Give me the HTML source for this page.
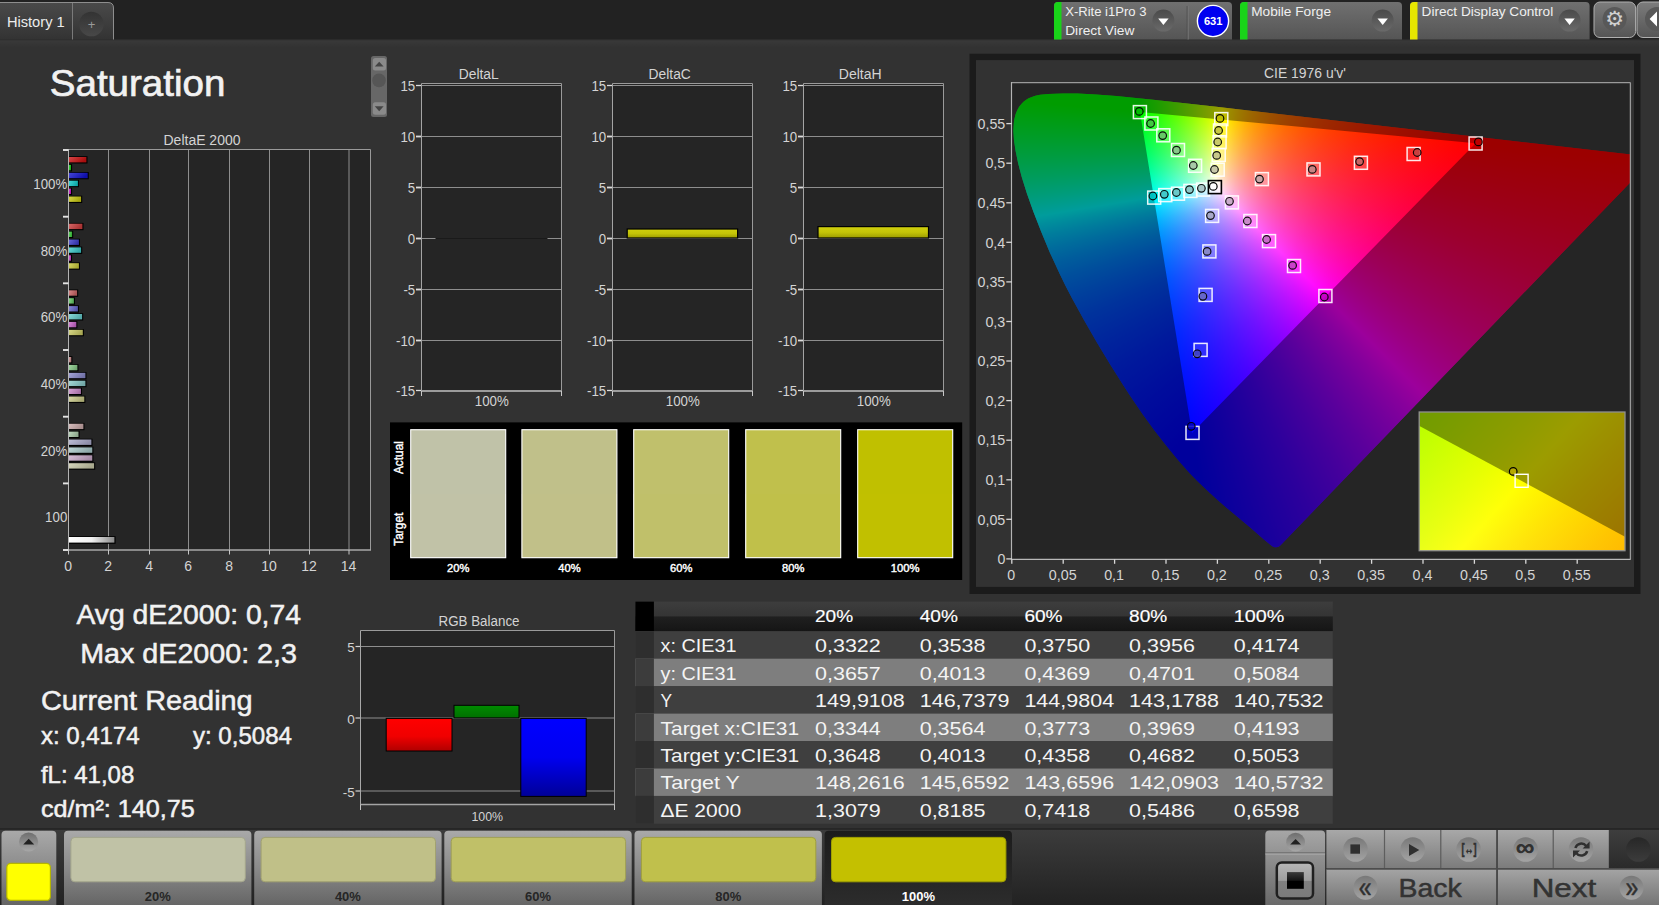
<!DOCTYPE html>
<html><head><meta charset="utf-8"><title>Saturation</title>
<style>
html,body{margin:0;padding:0;background:#323232;overflow:hidden}
body{width:1659px;height:905px;position:relative;font-family:"Liberation Sans",sans-serif}
#cie,#inset{position:absolute;overflow:hidden;background:#252525}
#cie div,#inset div{position:absolute;left:0;top:0;width:100%;height:100%}
svg{position:absolute;left:0;top:0}
svg text{font-family:"Liberation Sans",sans-serif}
</style></head><body>
<div id="cie" style="left:1012px;top:83px;width:618.5px;height:476.4px">
<div style="clip-path:polygon(259.9px 463.0px,261.7px 463.9px,263.0px 464.2px,264.4px 464.2px,265.7px 463.9px,267.0px 463.4px,268.6px 462.2px,633.1px 84.0px,633.9px 83.0px,634.5px 81.9px,634.9px 80.6px,635.0px 79.3px,634.9px 78.0px,634.5px 76.8px,633.9px 75.7px,633.1px 74.7px,632.1px 73.8px,630.9px 73.2px,629.0px 72.7px,202.3px 23.6px,143.5px 17.1px,104.3px 13.1px,84.0px 11.6px,65.5px 10.6px,50.8px 10.5px,36.3px 10.9px,28.1px 11.8px,23.4px 12.8px,20.6px 13.7px,16.6px 15.3px,14.6px 16.5px,12.1px 18.3px,10.3px 19.9px,7.5px 23.2px,6.1px 25.4px,4.9px 27.9px,3.6px 31.2px,2.2px 36.8px,1.8px 40.3px,1.4px 48.1px,2.0px 57.6px,3.6px 68.1px,6.2px 80.4px,9.8px 94.3px,14.9px 110.6px,21.3px 128.6px,29.0px 148.3px,37.8px 169.4px,48.0px 191.6px,53.6px 202.9px,59.6px 214.5px,72.1px 237.3px,85.2px 259.9px,98.5px 281.9px,111.6px 302.8px,118.1px 312.7px,130.5px 330.9px,142.5px 347.4px,153.8px 362.1px,164.4px 375.0px,169.3px 380.8px,178.2px 390.7px,186.1px 398.7px,196.6px 408.8px,206.2px 417.5px,214.8px 424.9px,238.8px 445.1px,251.9px 456.6px);background:conic-gradient(from 0deg at 179.97px 349.99px,#92ffff 0deg,#c3ffff 2.55deg,#f5ffff 4.9deg,#ffffff 5.35deg,#ffe3ff 6.7deg,#ffc9ff 8.2deg,#ffafff 9.95deg,#ff97ff 11.95deg,#ff80ff 14.3deg,#ff69ff 17.1deg,#ff54ff 20.4deg,#ff3fff 24.4deg,#ff2bff 29.3deg,#ff17ff 35.4deg,#ff03ff 43.15deg,#ff00ff 44.7deg,#ff00ff 170.8deg,#0000ff 170.85deg,#0000ff 224.35deg,#00ffff 224.4deg,#00ffff 350.8deg,#31ffff 354.15deg,#62ffff 357.25deg,#92ffff 360deg),conic-gradient(from 0deg at 128.00px 28.90px,#ffff00 0deg,#ffff00 95.45deg,#ffff2a 104.75deg,#ffff4e 111.95deg,#ffff71 117.85deg,#ffff92 122.8deg,#ffffb3 127.05deg,#ffffd4 130.75deg,#fffff5 134deg,#ffffff 134.9deg,#dbffff 138.2deg,#b8ffff 141.95deg,#94ffff 146.3deg,#6fffff 151.35deg,#49ffff 157.3deg,#20ffff 164.6deg,#00ffff 170.9deg,#00ffff 275.35deg,#00ff00 275.4deg,#00ff00 350.8deg,#ffff00 350.85deg,#ffff00 360deg),conic-gradient(from 0deg at 463.61px 60.34px,#ffff00 0deg,#ffff00 44.35deg,#ff0000 44.4deg,#ff0000 95.35deg,#ff00ff 95.4deg,#ff01ff 224.6deg,#ff15ff 231.85deg,#ff29ff 237.6deg,#ff3eff 242.25deg,#ff53ff 246.1deg,#ff6aff 249.3deg,#ff81ff 252deg,#ff99ff 254.3deg,#ffb2ff 256.25deg,#ffccff 257.95deg,#ffe7ff 259.45deg,#ffffff 260.55deg,#ffffc9 263.05deg,#ffff9a 265.45deg,#ffff6c 268.1deg,#ffff3e 271deg,#ffff0f 274.25deg,#ffff00 275.35deg,#ffff00 360deg);background-blend-mode:darken,darken,normal">
<div style="background:rgba(0,0,0,0.39);clip-path:polygon(evenodd,-5px -5px,700px -5px,700px 500px,-5px 500px,-5px -5px,463.6px 60.3px,128.0px 28.9px,180.0px 350.0px,463.6px 60.3px,-5px -5px)"></div>
</div></div>
<div id="inset" style="left:1419.2px;top:412.0px;width:205.8px;height:138.7px">
<div style="background:conic-gradient(from 36.6052deg at -1095.99px 1413.61px,#a3ffff 0deg,#c5ffff 2.06987deg,#e7ffff 3.94447deg,#ffffff 5.11609deg,#ffe2ff 6.58063deg,#ffc6ff 8.20137deg,#ffabff 10.0369deg,#ffaaff 10.1736deg),conic-gradient(from 105.771deg at -428.49px -217.19px,#ffff00 0deg,#ffff00 12.7462deg,#ffff23 26.689deg,#ffff24 27.0532deg),conic-gradient(from 291.26deg at 1084.51px 598.21px,#ffff22 0deg,#ffff0b 4.65455deg,#ffff00 7.16519deg,#ffff00 14.6689deg);background-blend-mode:darken,darken,normal">
<div style="background:rgba(0,0,0,0.39);clip-path:polygon(-2px 12.7px,207.8px 125.7px,207.8px -2px,-2px -2px)"></div>
</div></div>

<svg width="1659" height="905" viewBox="0 0 1659 905">
<defs><linearGradient id="gBand" x1="0" y1="0" x2="0" y2="1"><stop offset="0" stop-color="#393939"/><stop offset="1" stop-color="#323232"/></linearGradient>
<linearGradient id="gTab" x1="0" y1="0" x2="0" y2="1"><stop offset="0" stop-color="#4a4a4a"/><stop offset="1" stop-color="#333333"/></linearGradient>
<linearGradient id="gPlus" x1="0" y1="0" x2="0" y2="1"><stop offset="0" stop-color="#333333"/><stop offset="1" stop-color="#484848"/></linearGradient>
<linearGradient id="gDev" x1="0" y1="0" x2="0" y2="1"><stop offset="0" stop-color="#707070"/><stop offset="1" stop-color="#555555"/></linearGradient>
<linearGradient id="gDrop" x1="0" y1="0" x2="0" y2="1"><stop offset="0" stop-color="#4a4a4a"/><stop offset="1" stop-color="#6a6a6a"/></linearGradient>
<linearGradient id="gBtn" x1="0" y1="0" x2="0" y2="1"><stop offset="0" stop-color="#7c7c7c"/><stop offset="1" stop-color="#555555"/></linearGradient>
<linearGradient id="b00" x1="0" y1="0" x2="1" y2="0.35"><stop offset="0" stop-color="#d84646"/><stop offset="1" stop-color="#a80e0e"/></linearGradient>
<linearGradient id="b01" x1="0" y1="0" x2="1" y2="0.35"><stop offset="0" stop-color="#46d846"/><stop offset="1" stop-color="#0ea80e"/></linearGradient>
<linearGradient id="b02" x1="0" y1="0" x2="1" y2="0.35"><stop offset="0" stop-color="#4646d8"/><stop offset="1" stop-color="#0e0ea8"/></linearGradient>
<linearGradient id="b03" x1="0" y1="0" x2="1" y2="0.35"><stop offset="0" stop-color="#46d8d8"/><stop offset="1" stop-color="#0ea8a8"/></linearGradient>
<linearGradient id="b04" x1="0" y1="0" x2="1" y2="0.35"><stop offset="0" stop-color="#d846d8"/><stop offset="1" stop-color="#a80ea8"/></linearGradient>
<linearGradient id="b05" x1="0" y1="0" x2="1" y2="0.35"><stop offset="0" stop-color="#d8d846"/><stop offset="1" stop-color="#a8a80e"/></linearGradient>
<linearGradient id="b10" x1="0" y1="0" x2="1" y2="0.35"><stop offset="0" stop-color="#d86767"/><stop offset="1" stop-color="#a83232"/></linearGradient>
<linearGradient id="b11" x1="0" y1="0" x2="1" y2="0.35"><stop offset="0" stop-color="#67d867"/><stop offset="1" stop-color="#32a832"/></linearGradient>
<linearGradient id="b12" x1="0" y1="0" x2="1" y2="0.35"><stop offset="0" stop-color="#6767d8"/><stop offset="1" stop-color="#3232a8"/></linearGradient>
<linearGradient id="b13" x1="0" y1="0" x2="1" y2="0.35"><stop offset="0" stop-color="#67d8d8"/><stop offset="1" stop-color="#32a8a8"/></linearGradient>
<linearGradient id="b14" x1="0" y1="0" x2="1" y2="0.35"><stop offset="0" stop-color="#d867d8"/><stop offset="1" stop-color="#a832a8"/></linearGradient>
<linearGradient id="b15" x1="0" y1="0" x2="1" y2="0.35"><stop offset="0" stop-color="#d8d867"/><stop offset="1" stop-color="#a8a832"/></linearGradient>
<linearGradient id="b20" x1="0" y1="0" x2="1" y2="0.35"><stop offset="0" stop-color="#d88888"/><stop offset="1" stop-color="#a85454"/></linearGradient>
<linearGradient id="b21" x1="0" y1="0" x2="1" y2="0.35"><stop offset="0" stop-color="#88d888"/><stop offset="1" stop-color="#54a854"/></linearGradient>
<linearGradient id="b22" x1="0" y1="0" x2="1" y2="0.35"><stop offset="0" stop-color="#8888d8"/><stop offset="1" stop-color="#5454a8"/></linearGradient>
<linearGradient id="b23" x1="0" y1="0" x2="1" y2="0.35"><stop offset="0" stop-color="#88d8d8"/><stop offset="1" stop-color="#54a8a8"/></linearGradient>
<linearGradient id="b24" x1="0" y1="0" x2="1" y2="0.35"><stop offset="0" stop-color="#d888d8"/><stop offset="1" stop-color="#a854a8"/></linearGradient>
<linearGradient id="b25" x1="0" y1="0" x2="1" y2="0.35"><stop offset="0" stop-color="#d8d888"/><stop offset="1" stop-color="#a8a854"/></linearGradient>
<linearGradient id="b30" x1="0" y1="0" x2="1" y2="0.35"><stop offset="0" stop-color="#d8a5a5"/><stop offset="1" stop-color="#a87272"/></linearGradient>
<linearGradient id="b31" x1="0" y1="0" x2="1" y2="0.35"><stop offset="0" stop-color="#a5d8a5"/><stop offset="1" stop-color="#72a872"/></linearGradient>
<linearGradient id="b32" x1="0" y1="0" x2="1" y2="0.35"><stop offset="0" stop-color="#a5a5d8"/><stop offset="1" stop-color="#7272a8"/></linearGradient>
<linearGradient id="b33" x1="0" y1="0" x2="1" y2="0.35"><stop offset="0" stop-color="#a5d8d8"/><stop offset="1" stop-color="#72a8a8"/></linearGradient>
<linearGradient id="b34" x1="0" y1="0" x2="1" y2="0.35"><stop offset="0" stop-color="#d8a5d8"/><stop offset="1" stop-color="#a872a8"/></linearGradient>
<linearGradient id="b35" x1="0" y1="0" x2="1" y2="0.35"><stop offset="0" stop-color="#d8d8a5"/><stop offset="1" stop-color="#a8a872"/></linearGradient>
<linearGradient id="b40" x1="0" y1="0" x2="1" y2="0.35"><stop offset="0" stop-color="#d8bfbf"/><stop offset="1" stop-color="#a88d8d"/></linearGradient>
<linearGradient id="b41" x1="0" y1="0" x2="1" y2="0.35"><stop offset="0" stop-color="#bfd8bf"/><stop offset="1" stop-color="#8da88d"/></linearGradient>
<linearGradient id="b42" x1="0" y1="0" x2="1" y2="0.35"><stop offset="0" stop-color="#bfbfd8"/><stop offset="1" stop-color="#8d8da8"/></linearGradient>
<linearGradient id="b43" x1="0" y1="0" x2="1" y2="0.35"><stop offset="0" stop-color="#bfd8d8"/><stop offset="1" stop-color="#8da8a8"/></linearGradient>
<linearGradient id="b44" x1="0" y1="0" x2="1" y2="0.35"><stop offset="0" stop-color="#d8bfd8"/><stop offset="1" stop-color="#a88da8"/></linearGradient>
<linearGradient id="b45" x1="0" y1="0" x2="1" y2="0.35"><stop offset="0" stop-color="#d8d8bf"/><stop offset="1" stop-color="#a8a88d"/></linearGradient>
<linearGradient id="bw" x1="0" y1="0" x2="1" y2="0"><stop offset="0" stop-color="#ffffff"/><stop offset="0.5" stop-color="#f0f0f0"/><stop offset="1" stop-color="#8a8a8a"/></linearGradient>
<linearGradient id="rbR" x1="0" y1="0" x2="0" y2="1"><stop offset="0" stop-color="#ff0000"/><stop offset="0.55" stop-color="#f00000"/><stop offset="1" stop-color="#b00000"/></linearGradient>
<linearGradient id="rbG" x1="0" y1="0" x2="0" y2="1"><stop offset="0" stop-color="#008c00"/><stop offset="1" stop-color="#007000"/></linearGradient>
<linearGradient id="rbB" x1="0" y1="0" x2="0" y2="1"><stop offset="0" stop-color="#0000ff"/><stop offset="0.5" stop-color="#0000f0"/><stop offset="1" stop-color="#000098"/></linearGradient>
<linearGradient id="gY" x1="0" y1="0" x2="0" y2="1"><stop offset="0" stop-color="#d0d00c"/><stop offset="0.5" stop-color="#c4c408"/><stop offset="1" stop-color="#9c9c00"/></linearGradient>
<linearGradient id="gHdr" x1="0" y1="0" x2="0" y2="1"><stop offset="0" stop-color="#3d3d3d"/><stop offset="0.47" stop-color="#353535"/><stop offset="0.53" stop-color="#1f1f1f"/><stop offset="1" stop-color="#151515"/></linearGradient>
<linearGradient id="gBar" x1="0" y1="0" x2="0" y2="1"><stop offset="0" stop-color="#3c3c3c"/><stop offset="1" stop-color="#222222"/></linearGradient>
<linearGradient id="gTile" x1="0" y1="0" x2="0" y2="1"><stop offset="0" stop-color="#a9a9a9"/><stop offset="0.5" stop-color="#8a8a8a"/><stop offset="1" stop-color="#646464"/></linearGradient>
<linearGradient id="gTileSel" x1="0" y1="0" x2="0" y2="1"><stop offset="0" stop-color="#1c1c1c"/><stop offset="1" stop-color="#2c2c2c"/></linearGradient>
<linearGradient id="gCirc" x1="0" y1="0" x2="0" y2="1"><stop offset="0" stop-color="#6e6e6e"/><stop offset="1" stop-color="#a8a8a8"/></linearGradient>
<linearGradient id="gCtl" x1="0" y1="0" x2="0" y2="1"><stop offset="0" stop-color="#a6a6a6"/><stop offset="1" stop-color="#686868"/></linearGradient>
<linearGradient id="gIco" x1="0" y1="0" x2="0" y2="1"><stop offset="0" stop-color="#b8b8b8"/><stop offset="0.5" stop-color="#9e9e9e"/><stop offset="0.51" stop-color="#808080"/><stop offset="1" stop-color="#7a7a7a"/></linearGradient>
<linearGradient id="gIcoB" x1="0" y1="0" x2="0" y2="1"><stop offset="0" stop-color="#3a3a3a"/><stop offset="0.5" stop-color="#141414"/><stop offset="0.52" stop-color="#000000"/><stop offset="1" stop-color="#000000"/></linearGradient>
<linearGradient id="gSm" x1="0" y1="0" x2="0" y2="1"><stop offset="0" stop-color="#a8a8a8"/><stop offset="1" stop-color="#7c7c7c"/></linearGradient>
<linearGradient id="gSmC" x1="0" y1="0" x2="0" y2="1"><stop offset="0" stop-color="#787878"/><stop offset="1" stop-color="#a4a4a4"/></linearGradient>
<linearGradient id="gDk" x1="0" y1="0" x2="0" y2="1"><stop offset="0" stop-color="#3e3e3e"/><stop offset="1" stop-color="#2a2a2a"/></linearGradient>
<linearGradient id="gDkC" x1="0" y1="0" x2="0" y2="1"><stop offset="0" stop-color="#272727"/><stop offset="1" stop-color="#3c3c3c"/></linearGradient>
<linearGradient id="gBig" x1="0" y1="0" x2="0" y2="1"><stop offset="0" stop-color="#a4a4a4"/><stop offset="1" stop-color="#747474"/></linearGradient></defs>
<rect x="0.0" y="0.0" width="1659.0" height="39.2" fill="#222222"/>
<rect x="0.0" y="39.2" width="1659.0" height="1.2" fill="#2b2b2b"/>
<rect x="0.0" y="40.4" width="1659.0" height="7.0" fill="url(#gBand)"/>
<path d="M0,39.5 L0,2.5 L108,2.5 Q113.5,2.5 113.5,8 L113.5,39.5 Z" fill="url(#gTab)"/>
<path d="M0,2.5 L108,2.5 Q113.5,2.5 113.5,8 L113.5,39.5" fill="none" stroke="#8e8e8e" stroke-width="1"/>
<line x1="72.5" y1="3.0" x2="72.5" y2="39.5" stroke="#7a7a7a" stroke-width="1"/>
<text x="6.9" y="27.0" font-size="14.0" fill="#ececec" textLength="57.8" lengthAdjust="spacingAndGlyphs">History 1</text>
<circle cx="91.4" cy="24" r="12.3" fill="url(#gPlus)"/>
<text x="91.6" y="28.6" font-size="13.0" fill="#9a9a9a" text-anchor="middle">+</text>
<path d="M1054.0,39.5 L1054.0,6 Q1054.0,2 1058.0,2 L1228.0,2 Q1232.0,2 1232.0,6 L1232.0,39.5 Z" fill="url(#gDev)"/>
<path d="M1054.0,39.5 L1054.0,6 Q1054.0,2 1058.0,2 L1061.5,2 L1061.5,39.5 Z" fill="#19d419"/>
<circle cx="1163.4" cy="20.6" r="11" fill="url(#gDrop)"/>
<path d="M1158.2,18.6 L1168.6,18.6 L1163.4,25 Z" fill="#ffffff"/>
<line x1="1187.2" y1="6.0" x2="1187.2" y2="39.5" stroke="#4c4c4c" stroke-width="1"/>
<line x1="1188.2" y1="6.0" x2="1188.2" y2="39.5" stroke="#777777" stroke-width="1"/>
<text x="1065.2" y="15.9" font-size="12.4" fill="#f0f0f0" textLength="81.3" lengthAdjust="spacingAndGlyphs">X-Rite i1Pro 3</text>
<text x="1065.2" y="34.6" font-size="12.4" fill="#f0f0f0" textLength="69.2" lengthAdjust="spacingAndGlyphs">Direct View</text>
<circle cx="1213" cy="21" r="15.6" fill="#0000f0" stroke="#ffffff" stroke-width="1.4"/>
<text x="1213.2" y="25.1" font-size="11.5" fill="#ffffff" text-anchor="middle" textLength="18.6" lengthAdjust="spacingAndGlyphs" font-weight="bold">631</text>
<path d="M1240.0,39.5 L1240.0,6 Q1240.0,2 1244.0,2 L1398.0,2 Q1402.0,2 1402.0,6 L1402.0,39.5 Z" fill="url(#gDev)"/>
<path d="M1240.0,39.5 L1240.0,6 Q1240.0,2 1244.0,2 L1247.5,2 L1247.5,39.5 Z" fill="#19d419"/>
<circle cx="1382.7" cy="20.6" r="11" fill="url(#gDrop)"/>
<path d="M1377.5,18.6 L1387.9,18.6 L1382.7,25 Z" fill="#ffffff"/>
<text x="1251.2" y="15.9" font-size="12.4" fill="#f0f0f0" textLength="79.8" lengthAdjust="spacingAndGlyphs">Mobile Forge</text>
<path d="M1410.0,39.5 L1410.0,6 Q1410.0,2 1414.0,2 L1585.6,2 Q1589.6,2 1589.6,6 L1589.6,39.5 Z" fill="url(#gDev)"/>
<path d="M1410.0,39.5 L1410.0,6 Q1410.0,2 1414.0,2 L1417.5,2 L1417.5,39.5 Z" fill="#e6e600"/>
<circle cx="1569.6" cy="20.6" r="11" fill="url(#gDrop)"/>
<path d="M1564.4,18.6 L1574.8,18.6 L1569.6,25 Z" fill="#ffffff"/>
<text x="1421.6" y="15.9" font-size="12.4" fill="#f0f0f0" textLength="131.6" lengthAdjust="spacingAndGlyphs">Direct Display Control</text>
<rect x="1594" y="2" width="41.6" height="35.5" rx="6" fill="url(#gBtn)" stroke="#b0b0b0" stroke-width="1"/>
<circle cx="1614.6" cy="19" r="12" fill="#585858"/>
<text x="1614.6" y="26.3" font-size="21.0" fill="#d0d0d0" text-anchor="middle" style="font-family:'DejaVu Sans',sans-serif">⚙</text>
<rect x="1637" y="2" width="41.6" height="35.5" rx="6" fill="url(#gBtn)" stroke="#b0b0b0" stroke-width="1"/>
<circle cx="1657" cy="19" r="12" fill="#585858"/>
<path d="M1649.6,19 L1657,11.5 L1657,26.5 Z" fill="#ffffff"/>
<text x="49.8" y="95.7" font-size="37.7" fill="#f2f2f2" textLength="175.6" lengthAdjust="spacingAndGlyphs" stroke="#f2f2f2" stroke-width="0.7">Saturation</text>
<rect x="371" y="56" width="16" height="61" rx="2.5" fill="#676767"/>
<rect x="372.8" y="58" width="13.2" height="12.6" rx="2.5" fill="#8a8a8a"/>
<path d="M374.8,66.5 L383.6,66.5 L379.2,61.8 Z" fill="#444444"/>
<circle cx="379" cy="80.4" r="6.8" fill="#565656"/>
<rect x="372.8" y="102.2" width="13.2" height="12.6" rx="2.5" fill="#8a8a8a"/>
<path d="M374.8,106.2 L383.6,106.2 L379.2,111.2 Z" fill="#444444"/>
<text x="202.0" y="145.0" font-size="14.0" fill="#d4d4d4" text-anchor="middle" textLength="77.0" lengthAdjust="spacingAndGlyphs">DeltaE 2000</text>
<rect x="68.5" y="149.5" width="302.0" height="400.5" fill="#252525"/>
<line x1="108.5" y1="149.5" x2="108.5" y2="550.0" stroke="#8e8e8e" stroke-width="1"/>
<line x1="149.5" y1="149.5" x2="149.5" y2="550.0" stroke="#8e8e8e" stroke-width="1"/>
<line x1="188.5" y1="149.5" x2="188.5" y2="550.0" stroke="#8e8e8e" stroke-width="1"/>
<line x1="229.5" y1="149.5" x2="229.5" y2="550.0" stroke="#8e8e8e" stroke-width="1"/>
<line x1="269.5" y1="149.5" x2="269.5" y2="550.0" stroke="#8e8e8e" stroke-width="1"/>
<line x1="309.5" y1="149.5" x2="309.5" y2="550.0" stroke="#8e8e8e" stroke-width="1"/>
<line x1="349.0" y1="149.5" x2="349.0" y2="550.0" stroke="#8e8e8e" stroke-width="1"/>
<line x1="68.5" y1="149.5" x2="370.5" y2="149.5" stroke="#9a9a9a" stroke-width="1"/>
<line x1="370.5" y1="149.5" x2="370.5" y2="550.0" stroke="#9a9a9a" stroke-width="1"/>
<line x1="68.5" y1="149.0" x2="68.5" y2="550.5" stroke="#b4b4b4" stroke-width="1"/>
<line x1="68.0" y1="550.0" x2="371.0" y2="550.0" stroke="#a8a8a8" stroke-width="1.6"/>
<line x1="63.0" y1="150.0" x2="68.5" y2="150.0" stroke="#e4e4e4" stroke-width="1.9"/>
<line x1="63.0" y1="216.7" x2="68.5" y2="216.7" stroke="#e4e4e4" stroke-width="1.9"/>
<line x1="63.0" y1="283.3" x2="68.5" y2="283.3" stroke="#e4e4e4" stroke-width="1.9"/>
<line x1="63.0" y1="350.0" x2="68.5" y2="350.0" stroke="#e4e4e4" stroke-width="1.9"/>
<line x1="63.0" y1="416.7" x2="68.5" y2="416.7" stroke="#e4e4e4" stroke-width="1.9"/>
<line x1="63.0" y1="483.4" x2="68.5" y2="483.4" stroke="#e4e4e4" stroke-width="1.9"/>
<line x1="63.0" y1="550.0" x2="68.5" y2="550.0" stroke="#e4e4e4" stroke-width="1.9"/>
<line x1="68.5" y1="550.0" x2="68.5" y2="554.5" stroke="#c8c8c8" stroke-width="1"/>
<text x="68.1" y="571.0" font-size="14.0" fill="#d4d4d4" text-anchor="middle">0</text>
<line x1="108.5" y1="550.0" x2="108.5" y2="554.5" stroke="#c8c8c8" stroke-width="1"/>
<text x="108.1" y="571.0" font-size="14.0" fill="#d4d4d4" text-anchor="middle">2</text>
<line x1="149.5" y1="550.0" x2="149.5" y2="554.5" stroke="#c8c8c8" stroke-width="1"/>
<text x="149.1" y="571.0" font-size="14.0" fill="#d4d4d4" text-anchor="middle">4</text>
<line x1="188.5" y1="550.0" x2="188.5" y2="554.5" stroke="#c8c8c8" stroke-width="1"/>
<text x="188.1" y="571.0" font-size="14.0" fill="#d4d4d4" text-anchor="middle">6</text>
<line x1="229.5" y1="550.0" x2="229.5" y2="554.5" stroke="#c8c8c8" stroke-width="1"/>
<text x="229.1" y="571.0" font-size="14.0" fill="#d4d4d4" text-anchor="middle">8</text>
<line x1="269.5" y1="550.0" x2="269.5" y2="554.5" stroke="#c8c8c8" stroke-width="1"/>
<text x="269.1" y="571.0" font-size="14.0" fill="#d4d4d4" text-anchor="middle">10</text>
<line x1="309.5" y1="550.0" x2="309.5" y2="554.5" stroke="#c8c8c8" stroke-width="1"/>
<text x="309.1" y="571.0" font-size="14.0" fill="#d4d4d4" text-anchor="middle">12</text>
<line x1="349.0" y1="550.0" x2="349.0" y2="554.5" stroke="#c8c8c8" stroke-width="1"/>
<text x="348.6" y="571.0" font-size="14.0" fill="#d4d4d4" text-anchor="middle">14</text>
<text x="67.3" y="188.9" font-size="14.0" fill="#d4d4d4" text-anchor="end" textLength="34.0" lengthAdjust="spacingAndGlyphs">100%</text>
<text x="67.3" y="255.6" font-size="14.0" fill="#d4d4d4" text-anchor="end" textLength="26.6" lengthAdjust="spacingAndGlyphs">80%</text>
<text x="67.3" y="322.2" font-size="14.0" fill="#d4d4d4" text-anchor="end" textLength="26.6" lengthAdjust="spacingAndGlyphs">60%</text>
<text x="67.3" y="388.9" font-size="14.0" fill="#d4d4d4" text-anchor="end" textLength="26.6" lengthAdjust="spacingAndGlyphs">40%</text>
<text x="67.3" y="455.6" font-size="14.0" fill="#d4d4d4" text-anchor="end" textLength="26.6" lengthAdjust="spacingAndGlyphs">20%</text>
<text x="67.3" y="522.2" font-size="14.0" fill="#d4d4d4" text-anchor="end" textLength="22.2" lengthAdjust="spacingAndGlyphs">100</text>
<rect x="69.0" y="156.2" width="18.5" height="7.3" fill="#000000"/>
<rect x="69.0" y="157.0" width="17.4" height="5.4" fill="url(#b00)"/>
<rect x="69.0" y="164.1" width="3.1" height="7.3" fill="#000000"/>
<rect x="69.0" y="164.9" width="2.0" height="5.4" fill="url(#b01)"/>
<rect x="69.0" y="172.0" width="19.8" height="7.3" fill="#000000"/>
<rect x="69.0" y="172.8" width="18.7" height="5.4" fill="url(#b02)"/>
<rect x="69.0" y="179.9" width="10.0" height="7.3" fill="#000000"/>
<rect x="69.0" y="180.7" width="8.9" height="5.4" fill="url(#b03)"/>
<rect x="69.0" y="187.8" width="3.1" height="7.3" fill="#000000"/>
<rect x="69.0" y="188.6" width="2.0" height="5.4" fill="url(#b04)"/>
<rect x="69.0" y="195.7" width="13.2" height="7.3" fill="#000000"/>
<rect x="69.0" y="196.5" width="12.1" height="5.4" fill="url(#b05)"/>
<rect x="69.0" y="222.9" width="14.5" height="7.3" fill="#000000"/>
<rect x="69.0" y="223.7" width="13.4" height="5.4" fill="url(#b10)"/>
<rect x="69.0" y="230.8" width="4.2" height="7.3" fill="#000000"/>
<rect x="69.0" y="231.6" width="3.1" height="5.4" fill="url(#b11)"/>
<rect x="69.0" y="238.7" width="11.0" height="7.3" fill="#000000"/>
<rect x="69.0" y="239.5" width="9.9" height="5.4" fill="url(#b12)"/>
<rect x="69.0" y="246.6" width="13.2" height="7.3" fill="#000000"/>
<rect x="69.0" y="247.4" width="12.1" height="5.4" fill="url(#b13)"/>
<rect x="69.0" y="254.5" width="3.1" height="7.3" fill="#000000"/>
<rect x="69.0" y="255.3" width="2.0" height="5.4" fill="url(#b14)"/>
<rect x="69.0" y="262.4" width="11.0" height="7.3" fill="#000000"/>
<rect x="69.0" y="263.2" width="9.9" height="5.4" fill="url(#b15)"/>
<rect x="69.0" y="289.5" width="9.2" height="7.3" fill="#000000"/>
<rect x="69.0" y="290.3" width="8.1" height="5.4" fill="url(#b20)"/>
<rect x="69.0" y="297.4" width="6.0" height="7.3" fill="#000000"/>
<rect x="69.0" y="298.2" width="4.9" height="5.4" fill="url(#b21)"/>
<rect x="69.0" y="305.3" width="10.0" height="7.3" fill="#000000"/>
<rect x="69.0" y="306.1" width="8.9" height="5.4" fill="url(#b22)"/>
<rect x="69.0" y="313.2" width="14.2" height="7.3" fill="#000000"/>
<rect x="69.0" y="314.0" width="13.1" height="5.4" fill="url(#b23)"/>
<rect x="69.0" y="321.1" width="8.4" height="7.3" fill="#000000"/>
<rect x="69.0" y="321.9" width="7.3" height="5.4" fill="url(#b24)"/>
<rect x="69.0" y="329.0" width="14.9" height="7.3" fill="#000000"/>
<rect x="69.0" y="329.8" width="13.8" height="5.4" fill="url(#b25)"/>
<rect x="69.0" y="356.2" width="3.4" height="7.3" fill="#000000"/>
<rect x="69.0" y="357.0" width="2.3" height="5.4" fill="url(#b30)"/>
<rect x="69.0" y="364.1" width="9.5" height="7.3" fill="#000000"/>
<rect x="69.0" y="364.9" width="8.4" height="5.4" fill="url(#b31)"/>
<rect x="69.0" y="372.0" width="17.5" height="7.3" fill="#000000"/>
<rect x="69.0" y="372.8" width="16.4" height="5.4" fill="url(#b32)"/>
<rect x="69.0" y="379.9" width="17.5" height="7.3" fill="#000000"/>
<rect x="69.0" y="380.7" width="16.4" height="5.4" fill="url(#b33)"/>
<rect x="69.0" y="387.8" width="13.0" height="7.3" fill="#000000"/>
<rect x="69.0" y="388.6" width="11.9" height="5.4" fill="url(#b34)"/>
<rect x="69.0" y="395.7" width="16.4" height="7.3" fill="#000000"/>
<rect x="69.0" y="396.5" width="15.3" height="5.4" fill="url(#b35)"/>
<rect x="69.0" y="422.9" width="15.5" height="7.3" fill="#000000"/>
<rect x="69.0" y="423.7" width="14.4" height="5.4" fill="url(#b40)"/>
<rect x="69.0" y="430.8" width="10.6" height="7.3" fill="#000000"/>
<rect x="69.0" y="431.6" width="9.5" height="5.4" fill="url(#b41)"/>
<rect x="69.0" y="438.7" width="23.5" height="7.3" fill="#000000"/>
<rect x="69.0" y="439.5" width="22.4" height="5.4" fill="url(#b42)"/>
<rect x="69.0" y="446.6" width="24.4" height="7.3" fill="#000000"/>
<rect x="69.0" y="447.4" width="23.3" height="5.4" fill="url(#b43)"/>
<rect x="69.0" y="454.5" width="24.4" height="7.3" fill="#000000"/>
<rect x="69.0" y="455.3" width="23.3" height="5.4" fill="url(#b44)"/>
<rect x="69.0" y="462.4" width="26.2" height="7.3" fill="#000000"/>
<rect x="69.0" y="463.2" width="25.1" height="5.4" fill="url(#b45)"/>
<rect x="69.0" y="536.2" width="46.6" height="7.6" fill="#000000"/>
<rect x="69.0" y="537.0" width="45.4" height="5.6" fill="url(#bw)"/>
<text x="76.4" y="624.0" font-size="27.0" fill="#f2f2f2" textLength="224.6" lengthAdjust="spacingAndGlyphs" stroke="#f2f2f2" stroke-width="0.5">Avg dE2000: 0,74</text>
<text x="80.2" y="663.3" font-size="27.0" fill="#f2f2f2" textLength="216.8" lengthAdjust="spacingAndGlyphs" stroke="#f2f2f2" stroke-width="0.5">Max dE2000: 2,3</text>
<text x="40.9" y="709.6" font-size="27.0" fill="#f2f2f2" textLength="211.8" lengthAdjust="spacingAndGlyphs" stroke="#f2f2f2" stroke-width="0.5">Current Reading</text>
<text x="40.9" y="744.3" font-size="24.0" fill="#f2f2f2" textLength="98.8" lengthAdjust="spacingAndGlyphs" stroke="#f2f2f2" stroke-width="0.5">x: 0,4174</text>
<text x="192.9" y="744.3" font-size="24.0" fill="#f2f2f2" textLength="99.1" lengthAdjust="spacingAndGlyphs" stroke="#f2f2f2" stroke-width="0.5">y: 0,5084</text>
<text x="40.9" y="782.9" font-size="24.0" fill="#f2f2f2" textLength="93.4" lengthAdjust="spacingAndGlyphs" stroke="#f2f2f2" stroke-width="0.5">fL: 41,08</text>
<text x="40.9" y="816.5" font-size="24.0" fill="#f2f2f2" textLength="153.9" lengthAdjust="spacingAndGlyphs" stroke="#f2f2f2" stroke-width="0.5">cd/m²: 140,75</text>
<text x="479.0" y="625.9" font-size="13.8" fill="#d4d4d4" text-anchor="middle" textLength="81.0" lengthAdjust="spacingAndGlyphs">RGB Balance</text>
<rect x="360.5" y="630.5" width="254.0" height="174.0" fill="#252525"/>
<line x1="360.5" y1="646.5" x2="614.5" y2="646.5" stroke="#8e8e8e" stroke-width="1"/>
<line x1="355.5" y1="646.5" x2="360.5" y2="646.5" stroke="#d4d4d4" stroke-width="1.2"/>
<line x1="360.5" y1="718.0" x2="614.5" y2="718.0" stroke="#8e8e8e" stroke-width="1"/>
<line x1="355.5" y1="718.0" x2="360.5" y2="718.0" stroke="#d4d4d4" stroke-width="1.2"/>
<line x1="360.5" y1="791.0" x2="614.5" y2="791.0" stroke="#8e8e8e" stroke-width="1"/>
<line x1="355.5" y1="791.0" x2="360.5" y2="791.0" stroke="#d4d4d4" stroke-width="1.2"/>
<line x1="360.5" y1="630.5" x2="614.5" y2="630.5" stroke="#9a9a9a" stroke-width="1"/>
<line x1="614.5" y1="630.5" x2="614.5" y2="804.5" stroke="#9a9a9a" stroke-width="1"/>
<line x1="360.5" y1="630.5" x2="360.5" y2="804.5" stroke="#a8a8a8" stroke-width="1"/>
<line x1="360.0" y1="804.5" x2="615.0" y2="804.5" stroke="#a4a4a4" stroke-width="1.6"/>
<line x1="360.5" y1="804.5" x2="360.5" y2="810.0" stroke="#c0c0c0" stroke-width="1"/>
<line x1="614.5" y1="804.5" x2="614.5" y2="810.0" stroke="#c0c0c0" stroke-width="1"/>
<text x="354.8" y="652.2" font-size="13.5" fill="#d4d4d4" text-anchor="end">5</text>
<text x="354.8" y="723.7" font-size="13.5" fill="#d4d4d4" text-anchor="end">0</text>
<text x="354.8" y="796.7" font-size="13.5" fill="#d4d4d4" text-anchor="end">-5</text>
<text x="487.3" y="821.2" font-size="13.0" fill="#d4d4d4" text-anchor="middle" textLength="31.6" lengthAdjust="spacingAndGlyphs">100%</text>
<rect x="386.2" y="718.4" width="65.8" height="32.6" fill="url(#rbR)" stroke="#000" stroke-width="1"/>
<rect x="454" y="705.3" width="65" height="12.6" fill="url(#rbG)" stroke="#000" stroke-width="1"/>
<rect x="520.8" y="718.4" width="65.4" height="78" fill="url(#rbB)" stroke="#000" stroke-width="1"/>
<rect x="421.5" y="83.5" width="140.0" height="307.5" fill="#252525"/>
<line x1="421.5" y1="85.5" x2="561.5" y2="85.5" stroke="#8e8e8e" stroke-width="1"/>
<line x1="416.0" y1="85.5" x2="421.5" y2="85.5" stroke="#dcdcdc" stroke-width="1.3"/>
<text x="415.2" y="90.6" font-size="14.0" fill="#d4d4d4" text-anchor="end" textLength="14.8" lengthAdjust="spacingAndGlyphs">15</text>
<line x1="421.5" y1="136.5" x2="561.5" y2="136.5" stroke="#8e8e8e" stroke-width="1"/>
<line x1="416.0" y1="136.5" x2="421.5" y2="136.5" stroke="#dcdcdc" stroke-width="1.8"/>
<text x="415.2" y="141.6" font-size="14.0" fill="#d4d4d4" text-anchor="end" textLength="14.8" lengthAdjust="spacingAndGlyphs">10</text>
<line x1="421.5" y1="187.5" x2="561.5" y2="187.5" stroke="#8e8e8e" stroke-width="1"/>
<line x1="416.0" y1="187.5" x2="421.5" y2="187.5" stroke="#dcdcdc" stroke-width="1.8"/>
<text x="415.2" y="192.6" font-size="14.0" fill="#d4d4d4" text-anchor="end" textLength="7.4" lengthAdjust="spacingAndGlyphs">5</text>
<line x1="421.5" y1="238.5" x2="561.5" y2="238.5" stroke="#8e8e8e" stroke-width="1"/>
<line x1="416.0" y1="238.5" x2="421.5" y2="238.5" stroke="#dcdcdc" stroke-width="1.8"/>
<text x="415.2" y="243.6" font-size="14.0" fill="#d4d4d4" text-anchor="end" textLength="7.4" lengthAdjust="spacingAndGlyphs">0</text>
<line x1="421.5" y1="289.5" x2="561.5" y2="289.5" stroke="#8e8e8e" stroke-width="1"/>
<line x1="416.0" y1="289.5" x2="421.5" y2="289.5" stroke="#dcdcdc" stroke-width="1.8"/>
<text x="415.2" y="294.6" font-size="14.0" fill="#d4d4d4" text-anchor="end" textLength="11.8" lengthAdjust="spacingAndGlyphs">-5</text>
<line x1="421.5" y1="340.5" x2="561.5" y2="340.5" stroke="#8e8e8e" stroke-width="1"/>
<line x1="416.0" y1="340.5" x2="421.5" y2="340.5" stroke="#dcdcdc" stroke-width="1.8"/>
<text x="415.2" y="345.6" font-size="14.0" fill="#d4d4d4" text-anchor="end" textLength="19.2" lengthAdjust="spacingAndGlyphs">-10</text>
<line x1="416.0" y1="390.5" x2="421.5" y2="390.5" stroke="#dcdcdc" stroke-width="1.3"/>
<text x="415.2" y="395.6" font-size="14.0" fill="#d4d4d4" text-anchor="end" textLength="19.2" lengthAdjust="spacingAndGlyphs">-15</text>
<line x1="421.5" y1="83.5" x2="561.5" y2="83.5" stroke="#9a9a9a" stroke-width="1"/>
<line x1="421.5" y1="83.5" x2="421.5" y2="391.0" stroke="#a4a4a4" stroke-width="1"/>
<line x1="561.5" y1="83.5" x2="561.5" y2="391.0" stroke="#9a9a9a" stroke-width="1"/>
<line x1="421.0" y1="391.0" x2="562.0" y2="391.0" stroke="#9c9c9c" stroke-width="2"/>
<line x1="421.5" y1="391.0" x2="421.5" y2="396.0" stroke="#c8c8c8" stroke-width="1"/>
<line x1="561.5" y1="391.0" x2="561.5" y2="396.0" stroke="#c8c8c8" stroke-width="1"/>
<text x="478.7" y="79.2" font-size="14.0" fill="#d4d4d4" text-anchor="middle" textLength="39.9" lengthAdjust="spacingAndGlyphs">DeltaL</text>
<text x="491.8" y="406.4" font-size="14.0" fill="#d4d4d4" text-anchor="middle" textLength="34.0" lengthAdjust="spacingAndGlyphs">100%</text>
<line x1="435.5" y1="238.5" x2="547.5" y2="238.5" stroke="#1a1a1a" stroke-width="1"/>
<rect x="612.5" y="83.5" width="140.0" height="307.5" fill="#252525"/>
<line x1="612.5" y1="85.5" x2="752.5" y2="85.5" stroke="#8e8e8e" stroke-width="1"/>
<line x1="607.0" y1="85.5" x2="612.5" y2="85.5" stroke="#dcdcdc" stroke-width="1.3"/>
<text x="606.2" y="90.6" font-size="14.0" fill="#d4d4d4" text-anchor="end" textLength="14.8" lengthAdjust="spacingAndGlyphs">15</text>
<line x1="612.5" y1="136.5" x2="752.5" y2="136.5" stroke="#8e8e8e" stroke-width="1"/>
<line x1="607.0" y1="136.5" x2="612.5" y2="136.5" stroke="#dcdcdc" stroke-width="1.8"/>
<text x="606.2" y="141.6" font-size="14.0" fill="#d4d4d4" text-anchor="end" textLength="14.8" lengthAdjust="spacingAndGlyphs">10</text>
<line x1="612.5" y1="187.5" x2="752.5" y2="187.5" stroke="#8e8e8e" stroke-width="1"/>
<line x1="607.0" y1="187.5" x2="612.5" y2="187.5" stroke="#dcdcdc" stroke-width="1.8"/>
<text x="606.2" y="192.6" font-size="14.0" fill="#d4d4d4" text-anchor="end" textLength="7.4" lengthAdjust="spacingAndGlyphs">5</text>
<line x1="612.5" y1="238.5" x2="752.5" y2="238.5" stroke="#8e8e8e" stroke-width="1"/>
<line x1="607.0" y1="238.5" x2="612.5" y2="238.5" stroke="#dcdcdc" stroke-width="1.8"/>
<text x="606.2" y="243.6" font-size="14.0" fill="#d4d4d4" text-anchor="end" textLength="7.4" lengthAdjust="spacingAndGlyphs">0</text>
<line x1="612.5" y1="289.5" x2="752.5" y2="289.5" stroke="#8e8e8e" stroke-width="1"/>
<line x1="607.0" y1="289.5" x2="612.5" y2="289.5" stroke="#dcdcdc" stroke-width="1.8"/>
<text x="606.2" y="294.6" font-size="14.0" fill="#d4d4d4" text-anchor="end" textLength="11.8" lengthAdjust="spacingAndGlyphs">-5</text>
<line x1="612.5" y1="340.5" x2="752.5" y2="340.5" stroke="#8e8e8e" stroke-width="1"/>
<line x1="607.0" y1="340.5" x2="612.5" y2="340.5" stroke="#dcdcdc" stroke-width="1.8"/>
<text x="606.2" y="345.6" font-size="14.0" fill="#d4d4d4" text-anchor="end" textLength="19.2" lengthAdjust="spacingAndGlyphs">-10</text>
<line x1="607.0" y1="390.5" x2="612.5" y2="390.5" stroke="#dcdcdc" stroke-width="1.3"/>
<text x="606.2" y="395.6" font-size="14.0" fill="#d4d4d4" text-anchor="end" textLength="19.2" lengthAdjust="spacingAndGlyphs">-15</text>
<line x1="612.5" y1="83.5" x2="752.5" y2="83.5" stroke="#9a9a9a" stroke-width="1"/>
<line x1="612.5" y1="83.5" x2="612.5" y2="391.0" stroke="#a4a4a4" stroke-width="1"/>
<line x1="752.5" y1="83.5" x2="752.5" y2="391.0" stroke="#9a9a9a" stroke-width="1"/>
<line x1="612.0" y1="391.0" x2="753.0" y2="391.0" stroke="#9c9c9c" stroke-width="2"/>
<line x1="612.5" y1="391.0" x2="612.5" y2="396.0" stroke="#c8c8c8" stroke-width="1"/>
<line x1="752.5" y1="391.0" x2="752.5" y2="396.0" stroke="#c8c8c8" stroke-width="1"/>
<text x="669.7" y="79.2" font-size="14.0" fill="#d4d4d4" text-anchor="middle" textLength="42.2" lengthAdjust="spacingAndGlyphs">DeltaC</text>
<text x="682.8" y="406.4" font-size="14.0" fill="#d4d4d4" text-anchor="middle" textLength="34.0" lengthAdjust="spacingAndGlyphs">100%</text>
<rect x="627.2" y="229.0" width="110.4" height="9.0" fill="url(#gY)" stroke="#000" stroke-width="1.2"/>
<rect x="803.5" y="83.5" width="140.0" height="307.5" fill="#252525"/>
<line x1="803.5" y1="85.5" x2="943.5" y2="85.5" stroke="#8e8e8e" stroke-width="1"/>
<line x1="798.0" y1="85.5" x2="803.5" y2="85.5" stroke="#dcdcdc" stroke-width="1.3"/>
<text x="797.2" y="90.6" font-size="14.0" fill="#d4d4d4" text-anchor="end" textLength="14.8" lengthAdjust="spacingAndGlyphs">15</text>
<line x1="803.5" y1="136.5" x2="943.5" y2="136.5" stroke="#8e8e8e" stroke-width="1"/>
<line x1="798.0" y1="136.5" x2="803.5" y2="136.5" stroke="#dcdcdc" stroke-width="1.8"/>
<text x="797.2" y="141.6" font-size="14.0" fill="#d4d4d4" text-anchor="end" textLength="14.8" lengthAdjust="spacingAndGlyphs">10</text>
<line x1="803.5" y1="187.5" x2="943.5" y2="187.5" stroke="#8e8e8e" stroke-width="1"/>
<line x1="798.0" y1="187.5" x2="803.5" y2="187.5" stroke="#dcdcdc" stroke-width="1.8"/>
<text x="797.2" y="192.6" font-size="14.0" fill="#d4d4d4" text-anchor="end" textLength="7.4" lengthAdjust="spacingAndGlyphs">5</text>
<line x1="803.5" y1="238.5" x2="943.5" y2="238.5" stroke="#8e8e8e" stroke-width="1"/>
<line x1="798.0" y1="238.5" x2="803.5" y2="238.5" stroke="#dcdcdc" stroke-width="1.8"/>
<text x="797.2" y="243.6" font-size="14.0" fill="#d4d4d4" text-anchor="end" textLength="7.4" lengthAdjust="spacingAndGlyphs">0</text>
<line x1="803.5" y1="289.5" x2="943.5" y2="289.5" stroke="#8e8e8e" stroke-width="1"/>
<line x1="798.0" y1="289.5" x2="803.5" y2="289.5" stroke="#dcdcdc" stroke-width="1.8"/>
<text x="797.2" y="294.6" font-size="14.0" fill="#d4d4d4" text-anchor="end" textLength="11.8" lengthAdjust="spacingAndGlyphs">-5</text>
<line x1="803.5" y1="340.5" x2="943.5" y2="340.5" stroke="#8e8e8e" stroke-width="1"/>
<line x1="798.0" y1="340.5" x2="803.5" y2="340.5" stroke="#dcdcdc" stroke-width="1.8"/>
<text x="797.2" y="345.6" font-size="14.0" fill="#d4d4d4" text-anchor="end" textLength="19.2" lengthAdjust="spacingAndGlyphs">-10</text>
<line x1="798.0" y1="390.5" x2="803.5" y2="390.5" stroke="#dcdcdc" stroke-width="1.3"/>
<text x="797.2" y="395.6" font-size="14.0" fill="#d4d4d4" text-anchor="end" textLength="19.2" lengthAdjust="spacingAndGlyphs">-15</text>
<line x1="803.5" y1="83.5" x2="943.5" y2="83.5" stroke="#9a9a9a" stroke-width="1"/>
<line x1="803.5" y1="83.5" x2="803.5" y2="391.0" stroke="#a4a4a4" stroke-width="1"/>
<line x1="943.5" y1="83.5" x2="943.5" y2="391.0" stroke="#9a9a9a" stroke-width="1"/>
<line x1="803.0" y1="391.0" x2="944.0" y2="391.0" stroke="#9c9c9c" stroke-width="2"/>
<line x1="803.5" y1="391.0" x2="803.5" y2="396.0" stroke="#c8c8c8" stroke-width="1"/>
<line x1="943.5" y1="391.0" x2="943.5" y2="396.0" stroke="#c8c8c8" stroke-width="1"/>
<text x="860.2" y="79.2" font-size="14.0" fill="#d4d4d4" text-anchor="middle" textLength="42.9" lengthAdjust="spacingAndGlyphs">DeltaH</text>
<text x="873.8" y="406.4" font-size="14.0" fill="#d4d4d4" text-anchor="middle" textLength="34.0" lengthAdjust="spacingAndGlyphs">100%</text>
<rect x="818.0" y="226.6" width="110.5" height="11.4" fill="url(#gY)" stroke="#000" stroke-width="1.2"/>
<rect x="390.0" y="422.4" width="572.2" height="157.6" fill="#000000"/>
<rect x="410.7" y="429.7" width="95.0" height="128.0" fill="#c0c2a8"/>
<rect x="410.7" y="494.0" width="95.0" height="63.7" fill="#c1c2a7"/>
<rect x="410.7" y="429.7" width="95.0" height="128" fill="none" stroke="#ffffff" stroke-width="1.1"/>
<text x="458.2" y="572.0" font-size="10.6" fill="#ffffff" text-anchor="middle" textLength="22.3" lengthAdjust="spacingAndGlyphs" stroke="#fff" stroke-width="0.4">20%</text>
<rect x="521.9" y="429.7" width="95.0" height="128.0" fill="#c0c08a"/>
<rect x="521.9" y="494.0" width="95.0" height="63.7" fill="#c1c089"/>
<rect x="521.9" y="429.7" width="95.0" height="128" fill="none" stroke="#ffffff" stroke-width="1.1"/>
<text x="569.4" y="572.0" font-size="10.6" fill="#ffffff" text-anchor="middle" textLength="22.3" lengthAdjust="spacingAndGlyphs" stroke="#fff" stroke-width="0.4">40%</text>
<rect x="633.7" y="429.7" width="95.0" height="128.0" fill="#c0c06c"/>
<rect x="633.7" y="494.0" width="95.0" height="63.7" fill="#c0c06a"/>
<rect x="633.7" y="429.7" width="95.0" height="128" fill="none" stroke="#ffffff" stroke-width="1.1"/>
<text x="681.2" y="572.0" font-size="10.6" fill="#ffffff" text-anchor="middle" textLength="22.3" lengthAdjust="spacingAndGlyphs" stroke="#fff" stroke-width="0.4">60%</text>
<rect x="745.7" y="429.7" width="95.0" height="128.0" fill="#c0c04c"/>
<rect x="745.7" y="494.0" width="95.0" height="63.7" fill="#c0c04a"/>
<rect x="745.7" y="429.7" width="95.0" height="128" fill="none" stroke="#ffffff" stroke-width="1.1"/>
<text x="793.2" y="572.0" font-size="10.6" fill="#ffffff" text-anchor="middle" textLength="22.3" lengthAdjust="spacingAndGlyphs" stroke="#fff" stroke-width="0.4">80%</text>
<rect x="857.7" y="429.7" width="95.0" height="128.0" fill="#c0c000"/>
<rect x="857.7" y="494.0" width="95.0" height="63.7" fill="#c1c000"/>
<rect x="857.7" y="429.7" width="95.0" height="128" fill="none" stroke="#ffffff" stroke-width="1.1"/>
<text x="905.2" y="572.0" font-size="10.6" fill="#ffffff" text-anchor="middle" textLength="28.8" lengthAdjust="spacingAndGlyphs" stroke="#fff" stroke-width="0.4">100%</text>
<text transform="translate(403.2,457.6) rotate(-90)" font-size="12.3" fill="#fff" stroke="#fff" stroke-width="0.4" text-anchor="middle" textLength="33" lengthAdjust="spacingAndGlyphs">Actual</text>
<text transform="translate(403.2,529.2) rotate(-90)" font-size="12.3" fill="#fff" stroke="#fff" stroke-width="0.4" text-anchor="middle" textLength="33" lengthAdjust="spacingAndGlyphs">Target</text>
<rect x="635.4" y="601.6" width="697.4" height="29.6" fill="url(#gHdr)"/>
<rect x="635.4" y="601.6" width="18.5" height="29.6" fill="#000000"/>
<text x="815.0" y="622.4" font-size="16.6" fill="#ffffff" textLength="38.2" lengthAdjust="spacingAndGlyphs" stroke="#fff" stroke-width="0.15">20%</text>
<text x="919.7" y="622.4" font-size="16.6" fill="#ffffff" textLength="38.2" lengthAdjust="spacingAndGlyphs" stroke="#fff" stroke-width="0.15">40%</text>
<text x="1024.4" y="622.4" font-size="16.6" fill="#ffffff" textLength="38.2" lengthAdjust="spacingAndGlyphs" stroke="#fff" stroke-width="0.15">60%</text>
<text x="1129.1" y="622.4" font-size="16.6" fill="#ffffff" textLength="38.2" lengthAdjust="spacingAndGlyphs" stroke="#fff" stroke-width="0.15">80%</text>
<text x="1233.8" y="622.4" font-size="16.6" fill="#ffffff" textLength="50.6" lengthAdjust="spacingAndGlyphs" stroke="#fff" stroke-width="0.15">100%</text>
<rect x="635.4" y="631.2" width="697.4" height="27.8" fill="#3f3f3f"/>
<rect x="635.4" y="631.2" width="18.5" height="27.8" fill="#2e2e2e"/>
<text x="660.5" y="652.1" font-size="17.7" fill="#f4f4f4" textLength="76.0" lengthAdjust="spacingAndGlyphs">x: CIE31</text>
<text x="815.0" y="652.1" font-size="17.7" fill="#f4f4f4" textLength="65.8" lengthAdjust="spacingAndGlyphs">0,3322</text>
<text x="919.7" y="652.1" font-size="17.7" fill="#f4f4f4" textLength="65.8" lengthAdjust="spacingAndGlyphs">0,3538</text>
<text x="1024.4" y="652.1" font-size="17.7" fill="#f4f4f4" textLength="65.8" lengthAdjust="spacingAndGlyphs">0,3750</text>
<text x="1129.1" y="652.1" font-size="17.7" fill="#f4f4f4" textLength="65.8" lengthAdjust="spacingAndGlyphs">0,3956</text>
<text x="1233.8" y="652.1" font-size="17.7" fill="#f4f4f4" textLength="65.8" lengthAdjust="spacingAndGlyphs">0,4174</text>
<rect x="635.4" y="658.7" width="697.4" height="27.8" fill="#7e7e7e"/>
<rect x="635.4" y="658.7" width="18.5" height="27.8" fill="#3c3c3c"/>
<text x="660.5" y="679.6" font-size="17.7" fill="#f4f4f4" textLength="76.0" lengthAdjust="spacingAndGlyphs">y: CIE31</text>
<text x="815.0" y="679.6" font-size="17.7" fill="#f4f4f4" textLength="65.8" lengthAdjust="spacingAndGlyphs">0,3657</text>
<text x="919.7" y="679.6" font-size="17.7" fill="#f4f4f4" textLength="65.8" lengthAdjust="spacingAndGlyphs">0,4013</text>
<text x="1024.4" y="679.6" font-size="17.7" fill="#f4f4f4" textLength="65.8" lengthAdjust="spacingAndGlyphs">0,4369</text>
<text x="1129.1" y="679.6" font-size="17.7" fill="#f4f4f4" textLength="65.8" lengthAdjust="spacingAndGlyphs">0,4701</text>
<text x="1233.8" y="679.6" font-size="17.7" fill="#f4f4f4" textLength="65.8" lengthAdjust="spacingAndGlyphs">0,5084</text>
<rect x="635.4" y="686.1" width="697.4" height="27.8" fill="#3f3f3f"/>
<rect x="635.4" y="686.1" width="18.5" height="27.8" fill="#2e2e2e"/>
<text x="660.5" y="707.0" font-size="17.7" fill="#f4f4f4" textLength="11.6" lengthAdjust="spacingAndGlyphs">Y</text>
<text x="815.0" y="707.0" font-size="17.7" fill="#f4f4f4" textLength="89.8" lengthAdjust="spacingAndGlyphs">149,9108</text>
<text x="919.7" y="707.0" font-size="17.7" fill="#f4f4f4" textLength="89.8" lengthAdjust="spacingAndGlyphs">146,7379</text>
<text x="1024.4" y="707.0" font-size="17.7" fill="#f4f4f4" textLength="89.8" lengthAdjust="spacingAndGlyphs">144,9804</text>
<text x="1129.1" y="707.0" font-size="17.7" fill="#f4f4f4" textLength="89.8" lengthAdjust="spacingAndGlyphs">143,1788</text>
<text x="1233.8" y="707.0" font-size="17.7" fill="#f4f4f4" textLength="89.8" lengthAdjust="spacingAndGlyphs">140,7532</text>
<rect x="635.4" y="713.6" width="697.4" height="27.8" fill="#7e7e7e"/>
<rect x="635.4" y="713.6" width="18.5" height="27.8" fill="#3c3c3c"/>
<text x="660.5" y="734.5" font-size="17.7" fill="#f4f4f4" textLength="138.6" lengthAdjust="spacingAndGlyphs">Target x:CIE31</text>
<text x="815.0" y="734.5" font-size="17.7" fill="#f4f4f4" textLength="65.8" lengthAdjust="spacingAndGlyphs">0,3344</text>
<text x="919.7" y="734.5" font-size="17.7" fill="#f4f4f4" textLength="65.8" lengthAdjust="spacingAndGlyphs">0,3564</text>
<text x="1024.4" y="734.5" font-size="17.7" fill="#f4f4f4" textLength="65.8" lengthAdjust="spacingAndGlyphs">0,3773</text>
<text x="1129.1" y="734.5" font-size="17.7" fill="#f4f4f4" textLength="65.8" lengthAdjust="spacingAndGlyphs">0,3969</text>
<text x="1233.8" y="734.5" font-size="17.7" fill="#f4f4f4" textLength="65.8" lengthAdjust="spacingAndGlyphs">0,4193</text>
<rect x="635.4" y="741.0" width="697.4" height="27.8" fill="#3f3f3f"/>
<rect x="635.4" y="741.0" width="18.5" height="27.8" fill="#2e2e2e"/>
<text x="660.5" y="761.9" font-size="17.7" fill="#f4f4f4" textLength="138.6" lengthAdjust="spacingAndGlyphs">Target y:CIE31</text>
<text x="815.0" y="761.9" font-size="17.7" fill="#f4f4f4" textLength="65.8" lengthAdjust="spacingAndGlyphs">0,3648</text>
<text x="919.7" y="761.9" font-size="17.7" fill="#f4f4f4" textLength="65.8" lengthAdjust="spacingAndGlyphs">0,4013</text>
<text x="1024.4" y="761.9" font-size="17.7" fill="#f4f4f4" textLength="65.8" lengthAdjust="spacingAndGlyphs">0,4358</text>
<text x="1129.1" y="761.9" font-size="17.7" fill="#f4f4f4" textLength="65.8" lengthAdjust="spacingAndGlyphs">0,4682</text>
<text x="1233.8" y="761.9" font-size="17.7" fill="#f4f4f4" textLength="65.8" lengthAdjust="spacingAndGlyphs">0,5053</text>
<rect x="635.4" y="768.5" width="697.4" height="27.8" fill="#7e7e7e"/>
<rect x="635.4" y="768.5" width="18.5" height="27.8" fill="#3c3c3c"/>
<text x="660.5" y="789.4" font-size="17.7" fill="#f4f4f4" textLength="79.3" lengthAdjust="spacingAndGlyphs">Target Y</text>
<text x="815.0" y="789.4" font-size="17.7" fill="#f4f4f4" textLength="89.8" lengthAdjust="spacingAndGlyphs">148,2616</text>
<text x="919.7" y="789.4" font-size="17.7" fill="#f4f4f4" textLength="89.8" lengthAdjust="spacingAndGlyphs">145,6592</text>
<text x="1024.4" y="789.4" font-size="17.7" fill="#f4f4f4" textLength="89.8" lengthAdjust="spacingAndGlyphs">143,6596</text>
<text x="1129.1" y="789.4" font-size="17.7" fill="#f4f4f4" textLength="89.8" lengthAdjust="spacingAndGlyphs">142,0903</text>
<text x="1233.8" y="789.4" font-size="17.7" fill="#f4f4f4" textLength="89.8" lengthAdjust="spacingAndGlyphs">140,5732</text>
<rect x="635.4" y="795.9" width="697.4" height="27.8" fill="#3f3f3f"/>
<rect x="635.4" y="795.9" width="18.5" height="27.8" fill="#2e2e2e"/>
<text x="660.5" y="816.8" font-size="17.7" fill="#f4f4f4" textLength="80.6" lengthAdjust="spacingAndGlyphs">ΔE 2000</text>
<text x="815.0" y="816.8" font-size="17.7" fill="#f4f4f4" textLength="65.8" lengthAdjust="spacingAndGlyphs">1,3079</text>
<text x="919.7" y="816.8" font-size="17.7" fill="#f4f4f4" textLength="65.8" lengthAdjust="spacingAndGlyphs">0,8185</text>
<text x="1024.4" y="816.8" font-size="17.7" fill="#f4f4f4" textLength="65.8" lengthAdjust="spacingAndGlyphs">0,7418</text>
<text x="1129.1" y="816.8" font-size="17.7" fill="#f4f4f4" textLength="65.8" lengthAdjust="spacingAndGlyphs">0,5486</text>
<text x="1233.8" y="816.8" font-size="17.7" fill="#f4f4f4" textLength="65.8" lengthAdjust="spacingAndGlyphs">0,6598</text>
<path fill-rule="evenodd" fill="#1b1b1b" d="M969.5,53.7 H1640.5 V593.9 H969.5 Z M976,60.2 V586.8 H1634 V60.2 Z"/>
<path fill-rule="evenodd" fill="#323232" d="M976,60.2 H1634 V586.8 H976 Z M1012,83 V559.4 H1630.5 V83 Z"/>
<text x="1305.0" y="78.0" font-size="14.0" fill="#d4d4d4" text-anchor="middle" textLength="82.0" lengthAdjust="spacingAndGlyphs">CIE 1976 u'v'</text>
<line x1="1011.8" y1="82.7" x2="1630.6" y2="82.7" stroke="#9a9a9a" stroke-width="1.3"/>
<line x1="1630.4" y1="82.7" x2="1630.4" y2="559.4" stroke="#9a9a9a" stroke-width="1.3"/>
<line x1="1011.5" y1="82.0" x2="1011.5" y2="560.0" stroke="#b4b4b4" stroke-width="1.15"/>
<line x1="1011.8" y1="559.4" x2="1630.6" y2="559.4" stroke="#b8b8b8" stroke-width="1.3"/>
<line x1="1011.8" y1="559.4" x2="1011.8" y2="563.8" stroke="#d8d8d8" stroke-width="1.3"/>
<text x="1011.3" y="580.3" font-size="14.0" fill="#d4d4d4" text-anchor="middle" textLength="7.9" lengthAdjust="spacingAndGlyphs">0</text>
<line x1="1006.3" y1="558.9" x2="1011.8" y2="558.9" stroke="#d8d8d8" stroke-width="1.3"/>
<text x="1005.3" y="564.1" font-size="14.0" fill="#d4d4d4" text-anchor="end" textLength="7.9" lengthAdjust="spacingAndGlyphs">0</text>
<line x1="1063.2" y1="559.4" x2="1063.2" y2="563.8" stroke="#d8d8d8" stroke-width="1.3"/>
<text x="1062.7" y="580.3" font-size="14.0" fill="#d4d4d4" text-anchor="middle" textLength="27.8" lengthAdjust="spacingAndGlyphs">0,05</text>
<line x1="1006.3" y1="519.3" x2="1011.8" y2="519.3" stroke="#d8d8d8" stroke-width="1.3"/>
<text x="1005.3" y="524.5" font-size="14.0" fill="#d4d4d4" text-anchor="end" textLength="27.8" lengthAdjust="spacingAndGlyphs">0,05</text>
<line x1="1114.6" y1="559.4" x2="1114.6" y2="563.8" stroke="#d8d8d8" stroke-width="1.3"/>
<text x="1114.1" y="580.3" font-size="14.0" fill="#d4d4d4" text-anchor="middle" textLength="19.9" lengthAdjust="spacingAndGlyphs">0,1</text>
<line x1="1006.3" y1="479.8" x2="1011.8" y2="479.8" stroke="#d8d8d8" stroke-width="1.3"/>
<text x="1005.3" y="485.0" font-size="14.0" fill="#d4d4d4" text-anchor="end" textLength="19.9" lengthAdjust="spacingAndGlyphs">0,1</text>
<line x1="1166.0" y1="559.4" x2="1166.0" y2="563.8" stroke="#d8d8d8" stroke-width="1.3"/>
<text x="1165.5" y="580.3" font-size="14.0" fill="#d4d4d4" text-anchor="middle" textLength="27.8" lengthAdjust="spacingAndGlyphs">0,15</text>
<line x1="1006.3" y1="440.2" x2="1011.8" y2="440.2" stroke="#d8d8d8" stroke-width="1.3"/>
<text x="1005.3" y="445.4" font-size="14.0" fill="#d4d4d4" text-anchor="end" textLength="27.8" lengthAdjust="spacingAndGlyphs">0,15</text>
<line x1="1217.4" y1="559.4" x2="1217.4" y2="563.8" stroke="#d8d8d8" stroke-width="1.3"/>
<text x="1216.9" y="580.3" font-size="14.0" fill="#d4d4d4" text-anchor="middle" textLength="19.9" lengthAdjust="spacingAndGlyphs">0,2</text>
<line x1="1006.3" y1="400.6" x2="1011.8" y2="400.6" stroke="#d8d8d8" stroke-width="1.3"/>
<text x="1005.3" y="405.8" font-size="14.0" fill="#d4d4d4" text-anchor="end" textLength="19.9" lengthAdjust="spacingAndGlyphs">0,2</text>
<line x1="1268.8" y1="559.4" x2="1268.8" y2="563.8" stroke="#d8d8d8" stroke-width="1.3"/>
<text x="1268.3" y="580.3" font-size="14.0" fill="#d4d4d4" text-anchor="middle" textLength="27.8" lengthAdjust="spacingAndGlyphs">0,25</text>
<line x1="1006.3" y1="361.0" x2="1011.8" y2="361.0" stroke="#d8d8d8" stroke-width="1.3"/>
<text x="1005.3" y="366.2" font-size="14.0" fill="#d4d4d4" text-anchor="end" textLength="27.8" lengthAdjust="spacingAndGlyphs">0,25</text>
<line x1="1320.2" y1="559.4" x2="1320.2" y2="563.8" stroke="#d8d8d8" stroke-width="1.3"/>
<text x="1319.7" y="580.3" font-size="14.0" fill="#d4d4d4" text-anchor="middle" textLength="19.9" lengthAdjust="spacingAndGlyphs">0,3</text>
<line x1="1006.3" y1="321.5" x2="1011.8" y2="321.5" stroke="#d8d8d8" stroke-width="1.3"/>
<text x="1005.3" y="326.7" font-size="14.0" fill="#d4d4d4" text-anchor="end" textLength="19.9" lengthAdjust="spacingAndGlyphs">0,3</text>
<line x1="1371.6" y1="559.4" x2="1371.6" y2="563.8" stroke="#d8d8d8" stroke-width="1.3"/>
<text x="1371.1" y="580.3" font-size="14.0" fill="#d4d4d4" text-anchor="middle" textLength="27.8" lengthAdjust="spacingAndGlyphs">0,35</text>
<line x1="1006.3" y1="281.9" x2="1011.8" y2="281.9" stroke="#d8d8d8" stroke-width="1.3"/>
<text x="1005.3" y="287.1" font-size="14.0" fill="#d4d4d4" text-anchor="end" textLength="27.8" lengthAdjust="spacingAndGlyphs">0,35</text>
<line x1="1423.0" y1="559.4" x2="1423.0" y2="563.8" stroke="#d8d8d8" stroke-width="1.3"/>
<text x="1422.5" y="580.3" font-size="14.0" fill="#d4d4d4" text-anchor="middle" textLength="19.9" lengthAdjust="spacingAndGlyphs">0,4</text>
<line x1="1006.3" y1="242.3" x2="1011.8" y2="242.3" stroke="#d8d8d8" stroke-width="1.3"/>
<text x="1005.3" y="247.5" font-size="14.0" fill="#d4d4d4" text-anchor="end" textLength="19.9" lengthAdjust="spacingAndGlyphs">0,4</text>
<line x1="1474.4" y1="559.4" x2="1474.4" y2="563.8" stroke="#d8d8d8" stroke-width="1.3"/>
<text x="1473.9" y="580.3" font-size="14.0" fill="#d4d4d4" text-anchor="middle" textLength="27.8" lengthAdjust="spacingAndGlyphs">0,45</text>
<line x1="1006.3" y1="202.8" x2="1011.8" y2="202.8" stroke="#d8d8d8" stroke-width="1.3"/>
<text x="1005.3" y="208.0" font-size="14.0" fill="#d4d4d4" text-anchor="end" textLength="27.8" lengthAdjust="spacingAndGlyphs">0,45</text>
<line x1="1525.8" y1="559.4" x2="1525.8" y2="563.8" stroke="#d8d8d8" stroke-width="1.3"/>
<text x="1525.3" y="580.3" font-size="14.0" fill="#d4d4d4" text-anchor="middle" textLength="19.9" lengthAdjust="spacingAndGlyphs">0,5</text>
<line x1="1006.3" y1="163.2" x2="1011.8" y2="163.2" stroke="#d8d8d8" stroke-width="1.3"/>
<text x="1005.3" y="168.4" font-size="14.0" fill="#d4d4d4" text-anchor="end" textLength="19.9" lengthAdjust="spacingAndGlyphs">0,5</text>
<line x1="1577.2" y1="559.4" x2="1577.2" y2="563.8" stroke="#d8d8d8" stroke-width="1.3"/>
<text x="1576.7" y="580.3" font-size="14.0" fill="#d4d4d4" text-anchor="middle" textLength="27.8" lengthAdjust="spacingAndGlyphs">0,55</text>
<line x1="1006.3" y1="123.6" x2="1011.8" y2="123.6" stroke="#d8d8d8" stroke-width="1.3"/>
<text x="1005.3" y="128.8" font-size="14.0" fill="#d4d4d4" text-anchor="end" textLength="27.8" lengthAdjust="spacingAndGlyphs">0,55</text>
<rect x="1419.2" y="412.0" width="205.8" height="138.7" fill="none" stroke="#909090" stroke-width="1.3"/>
<circle cx="1513.2" cy="471.4" r="3.8" fill="#b6aa00" stroke="#000" stroke-width="1.2"/>
<rect x="1515.1" y="474.3" width="13" height="13" fill="none" stroke="#ffffff" stroke-width="1.4"/>
<rect x="1133.4" y="105.6" width="13" height="13" fill="#00ff00" fill-opacity="0.35" stroke="#ffffff" stroke-opacity="0.9" stroke-width="1.5"/>
<rect x="1144.9" y="117.0" width="13" height="13" fill="#5aff5a" fill-opacity="0.35" stroke="#ffffff" stroke-opacity="0.9" stroke-width="1.5"/>
<rect x="1156.8" y="128.8" width="13" height="13" fill="#8dff8d" fill-opacity="0.35" stroke="#ffffff" stroke-opacity="0.9" stroke-width="1.5"/>
<rect x="1171.5" y="143.5" width="13" height="13" fill="#b7ffb7" fill-opacity="0.35" stroke="#ffffff" stroke-opacity="0.9" stroke-width="1.5"/>
<rect x="1188.6" y="159.3" width="13" height="13" fill="#ddffdd" fill-opacity="0.35" stroke="#ffffff" stroke-opacity="0.9" stroke-width="1.5"/>
<rect x="1214.8" y="112.6" width="13" height="13" fill="#ffff00" fill-opacity="0.35" stroke="#ffffff" stroke-opacity="0.9" stroke-width="1.5"/>
<rect x="1213.5" y="124.0" width="13" height="13" fill="#ffff5a" fill-opacity="0.35" stroke="#ffffff" stroke-opacity="0.9" stroke-width="1.5"/>
<rect x="1213.1" y="135.7" width="13" height="13" fill="#ffff8d" fill-opacity="0.35" stroke="#ffffff" stroke-opacity="0.9" stroke-width="1.5"/>
<rect x="1212.2" y="148.4" width="13" height="13" fill="#ffffb7" fill-opacity="0.35" stroke="#ffffff" stroke-opacity="0.9" stroke-width="1.5"/>
<rect x="1211.2" y="163.2" width="13" height="13" fill="#ffffdd" fill-opacity="0.35" stroke="#ffffff" stroke-opacity="0.9" stroke-width="1.5"/>
<rect x="1147.7" y="191.1" width="13" height="13" fill="#00ffff" fill-opacity="0.35" stroke="#ffffff" stroke-opacity="0.9" stroke-width="1.5"/>
<rect x="1158.8" y="188.6" width="13" height="13" fill="#5affff" fill-opacity="0.35" stroke="#ffffff" stroke-opacity="0.9" stroke-width="1.5"/>
<rect x="1171.5" y="187.2" width="13" height="13" fill="#8dffff" fill-opacity="0.35" stroke="#ffffff" stroke-opacity="0.9" stroke-width="1.5"/>
<rect x="1183.9" y="184.4" width="13" height="13" fill="#b7ffff" fill-opacity="0.35" stroke="#ffffff" stroke-opacity="0.9" stroke-width="1.5"/>
<rect x="1196.6" y="183.1" width="13" height="13" fill="#ddffff" fill-opacity="0.35" stroke="#ffffff" stroke-opacity="0.9" stroke-width="1.5"/>
<rect x="1318.9" y="289.5" width="13" height="13" fill="#ff00ff" fill-opacity="0.35" stroke="#ffffff" stroke-opacity="0.9" stroke-width="1.5"/>
<rect x="1287.5" y="259.5" width="13" height="13" fill="#ff5aff" fill-opacity="0.35" stroke="#ffffff" stroke-opacity="0.9" stroke-width="1.5"/>
<rect x="1262.5" y="234.6" width="13" height="13" fill="#ff8dff" fill-opacity="0.35" stroke="#ffffff" stroke-opacity="0.9" stroke-width="1.5"/>
<rect x="1243.9" y="214.5" width="13" height="13" fill="#ffb7ff" fill-opacity="0.35" stroke="#ffffff" stroke-opacity="0.9" stroke-width="1.5"/>
<rect x="1225.4" y="195.9" width="13" height="13" fill="#ffddff" fill-opacity="0.35" stroke="#ffffff" stroke-opacity="0.9" stroke-width="1.5"/>
<rect x="1186.0" y="426.4" width="13" height="13" fill="#0000ff" fill-opacity="0.35" stroke="#ffffff" stroke-opacity="0.9" stroke-width="1.5"/>
<rect x="1194.1" y="343.4" width="13" height="13" fill="#5a5aff" fill-opacity="0.35" stroke="#ffffff" stroke-opacity="0.9" stroke-width="1.5"/>
<rect x="1199.1" y="288.4" width="13" height="13" fill="#8d8dff" fill-opacity="0.35" stroke="#ffffff" stroke-opacity="0.9" stroke-width="1.5"/>
<rect x="1202.9" y="244.9" width="13" height="13" fill="#b7b7ff" fill-opacity="0.35" stroke="#ffffff" stroke-opacity="0.9" stroke-width="1.5"/>
<rect x="1205.6" y="209.4" width="13" height="13" fill="#ddddff" fill-opacity="0.35" stroke="#ffffff" stroke-opacity="0.9" stroke-width="1.5"/>
<rect x="1469.1" y="137.0" width="13" height="13" fill="#ff0000" fill-opacity="0.35" stroke="#ffffff" stroke-opacity="0.9" stroke-width="1.5"/>
<rect x="1407.1" y="147.5" width="13" height="13" fill="#ff5a5a" fill-opacity="0.35" stroke="#ffffff" stroke-opacity="0.9" stroke-width="1.5"/>
<rect x="1354.4" y="156.3" width="13" height="13" fill="#ff8d8d" fill-opacity="0.35" stroke="#ffffff" stroke-opacity="0.9" stroke-width="1.5"/>
<rect x="1307.0" y="162.9" width="13" height="13" fill="#ffb7b7" fill-opacity="0.35" stroke="#ffffff" stroke-opacity="0.9" stroke-width="1.5"/>
<rect x="1255.4" y="172.6" width="13" height="13" fill="#ffdddd" fill-opacity="0.35" stroke="#ffffff" stroke-opacity="0.9" stroke-width="1.5"/>
<rect x="1208.4" y="180.6" width="13" height="13" fill="#ffffff" fill-opacity="0.5" stroke="#000000" stroke-width="1.6"/>
<circle cx="1139.3" cy="111.4" r="3.8" fill="#00c000" fill-opacity="0.85" stroke="#000" stroke-opacity="0.92" stroke-width="1.2"/>
<circle cx="1150.6" cy="123.5" r="3.8" fill="#43c043" fill-opacity="0.85" stroke="#000" stroke-opacity="0.92" stroke-width="1.2"/>
<circle cx="1162.7" cy="135.6" r="3.8" fill="#6ac06a" fill-opacity="0.85" stroke="#000" stroke-opacity="0.92" stroke-width="1.2"/>
<circle cx="1176.5" cy="150.2" r="3.8" fill="#8ac08a" fill-opacity="0.85" stroke="#000" stroke-opacity="0.92" stroke-width="1.2"/>
<circle cx="1193.3" cy="165.5" r="3.8" fill="#a6c0a6" fill-opacity="0.85" stroke="#000" stroke-opacity="0.92" stroke-width="1.2"/>
<circle cx="1220.0" cy="118.4" r="3.8" fill="#c0c000" fill-opacity="0.85" stroke="#000" stroke-opacity="0.92" stroke-width="1.2"/>
<circle cx="1218.6" cy="130.5" r="3.8" fill="#c0c043" fill-opacity="0.85" stroke="#000" stroke-opacity="0.92" stroke-width="1.2"/>
<circle cx="1217.7" cy="142.0" r="3.8" fill="#c0c06a" fill-opacity="0.85" stroke="#000" stroke-opacity="0.92" stroke-width="1.2"/>
<circle cx="1216.7" cy="155.4" r="3.8" fill="#c0c08a" fill-opacity="0.85" stroke="#000" stroke-opacity="0.92" stroke-width="1.2"/>
<circle cx="1214.5" cy="169.5" r="3.8" fill="#c0c0a6" fill-opacity="0.85" stroke="#000" stroke-opacity="0.92" stroke-width="1.2"/>
<circle cx="1152.9" cy="196.0" r="3.8" fill="#00c0c0" fill-opacity="0.85" stroke="#000" stroke-opacity="0.92" stroke-width="1.2"/>
<circle cx="1164.3" cy="194.3" r="3.8" fill="#43c0c0" fill-opacity="0.85" stroke="#000" stroke-opacity="0.92" stroke-width="1.2"/>
<circle cx="1176.4" cy="192.5" r="3.8" fill="#6ac0c0" fill-opacity="0.85" stroke="#000" stroke-opacity="0.92" stroke-width="1.2"/>
<circle cx="1189.5" cy="189.6" r="3.8" fill="#8ac0c0" fill-opacity="0.85" stroke="#000" stroke-opacity="0.92" stroke-width="1.2"/>
<circle cx="1201.4" cy="188.3" r="3.8" fill="#a6c0c0" fill-opacity="0.85" stroke="#000" stroke-opacity="0.92" stroke-width="1.2"/>
<circle cx="1324.3" cy="297.0" r="3.8" fill="#c000c0" fill-opacity="0.85" stroke="#000" stroke-opacity="0.92" stroke-width="1.2"/>
<circle cx="1292.6" cy="265.4" r="3.8" fill="#c043c0" fill-opacity="0.85" stroke="#000" stroke-opacity="0.92" stroke-width="1.2"/>
<circle cx="1266.6" cy="239.5" r="3.8" fill="#c06ac0" fill-opacity="0.85" stroke="#000" stroke-opacity="0.92" stroke-width="1.2"/>
<circle cx="1247.3" cy="221.0" r="3.8" fill="#c08ac0" fill-opacity="0.85" stroke="#000" stroke-opacity="0.92" stroke-width="1.2"/>
<circle cx="1229.5" cy="201.3" r="3.8" fill="#c0a6c0" fill-opacity="0.85" stroke="#000" stroke-opacity="0.92" stroke-width="1.2"/>
<circle cx="1191.3" cy="426.3" r="3.8" fill="#0000c0" fill-opacity="0.85" stroke="#000" stroke-opacity="0.92" stroke-width="1.2"/>
<circle cx="1197.2" cy="353.8" r="3.8" fill="#4343c0" fill-opacity="0.85" stroke="#000" stroke-opacity="0.92" stroke-width="1.2"/>
<circle cx="1202.9" cy="296.3" r="3.8" fill="#6a6ac0" fill-opacity="0.85" stroke="#000" stroke-opacity="0.92" stroke-width="1.2"/>
<circle cx="1207.1" cy="251.4" r="3.8" fill="#8a8ac0" fill-opacity="0.85" stroke="#000" stroke-opacity="0.92" stroke-width="1.2"/>
<circle cx="1210.5" cy="215.6" r="3.8" fill="#a6a6c0" fill-opacity="0.85" stroke="#000" stroke-opacity="0.92" stroke-width="1.2"/>
<circle cx="1478.4" cy="141.9" r="3.8" fill="#c00000" fill-opacity="0.85" stroke="#000" stroke-opacity="0.92" stroke-width="1.2"/>
<circle cx="1417.2" cy="152.5" r="3.8" fill="#c04343" fill-opacity="0.85" stroke="#000" stroke-opacity="0.92" stroke-width="1.2"/>
<circle cx="1359.6" cy="161.6" r="3.8" fill="#c06a6a" fill-opacity="0.85" stroke="#000" stroke-opacity="0.92" stroke-width="1.2"/>
<circle cx="1312.3" cy="169.4" r="3.8" fill="#c08a8a" fill-opacity="0.85" stroke="#000" stroke-opacity="0.92" stroke-width="1.2"/>
<circle cx="1259.5" cy="179.1" r="3.8" fill="#c0a6a6" fill-opacity="0.85" stroke="#000" stroke-opacity="0.92" stroke-width="1.2"/>
<circle cx="1213.3" cy="186.4" r="3.8" fill="#ffffff" stroke="#000" stroke-width="1.2"/>
<rect x="0.0" y="829.0" width="1659.0" height="76.0" fill="url(#gBar)"/>
<rect x="0.0" y="828.2" width="1659.0" height="1.6" fill="#252525"/>
<path d="M1.5,906.0 L1.5,834.8 Q1.5,830.8 5.5,830.8 L52.3,830.8 Q56.3,830.8 56.3,834.8 L56.3,906.0 Z" fill="url(#gTile)"/>
<circle cx="28.6" cy="842" r="9.6" fill="url(#gCirc)"/>
<path d="M23.2,844.4 L34.2,844.4 L28.7,838.8 Z" fill="#222222"/>
<rect x="6.8" y="863.4" width="43.6" height="37" rx="4" fill="#ffff00" stroke="#b4b400" stroke-width="1.2"/>
<path d="M64.0,906.0 L64.0,834.8 Q64.0,830.8 68.0,830.8 L247.4,830.8 Q251.4,830.8 251.4,834.8 L251.4,906.0 Z" fill="url(#gTile)"/>
<rect x="70.9" y="837.4" width="174.4" height="44.4" rx="4" fill="#c0c2a6" stroke="#a4a68c" stroke-width="1"/>
<text x="157.8" y="900.8" font-size="12.6" fill="#262626" text-anchor="middle" textLength="26.0" lengthAdjust="spacingAndGlyphs" font-weight="bold">20%</text>
<path d="M254.2,906.0 L254.2,834.8 Q254.2,830.8 258.1,830.8 L437.6,830.8 Q441.6,830.8 441.6,834.8 L441.6,906.0 Z" fill="url(#gTile)"/>
<rect x="261.1" y="837.4" width="174.4" height="44.4" rx="4" fill="#c0c088" stroke="#a2a270" stroke-width="1"/>
<text x="347.9" y="900.8" font-size="12.6" fill="#262626" text-anchor="middle" textLength="26.0" lengthAdjust="spacingAndGlyphs" font-weight="bold">40%</text>
<path d="M444.3,906.0 L444.3,834.8 Q444.3,830.8 448.3,830.8 L627.7,830.8 Q631.7,830.8 631.7,834.8 L631.7,906.0 Z" fill="url(#gTile)"/>
<rect x="451.2" y="837.4" width="174.4" height="44.4" rx="4" fill="#c0c068" stroke="#a0a054" stroke-width="1"/>
<text x="538.1" y="900.8" font-size="12.6" fill="#262626" text-anchor="middle" textLength="26.0" lengthAdjust="spacingAndGlyphs" font-weight="bold">60%</text>
<path d="M634.5,906.0 L634.5,834.8 Q634.5,830.8 638.5,830.8 L817.9,830.8 Q821.9,830.8 821.9,834.8 L821.9,906.0 Z" fill="url(#gTile)"/>
<rect x="641.4" y="837.4" width="174.4" height="44.4" rx="4" fill="#c0c04c" stroke="#a0a03c" stroke-width="1"/>
<text x="728.2" y="900.8" font-size="12.6" fill="#262626" text-anchor="middle" textLength="26.0" lengthAdjust="spacingAndGlyphs" font-weight="bold">80%</text>
<path d="M824.6,906.0 L824.6,834.8 Q824.6,830.8 828.6,830.8 L1008.0,830.8 Q1012.0,830.8 1012.0,834.8 L1012.0,906.0 Z" fill="url(#gTileSel)"/>
<rect x="831.5" y="837.4" width="174.4" height="44.4" rx="4" fill="#c4c000" stroke="#a0a000" stroke-width="1"/>
<text x="918.4" y="900.8" font-size="12.6" fill="#ffffff" text-anchor="middle" textLength="33.2" lengthAdjust="spacingAndGlyphs" font-weight="bold">100%</text>
<path d="M1265.3,906.0 L1265.3,834.6 Q1265.3,830.6 1269.3,830.6 L1321.1,830.6 Q1325.1,830.6 1325.1,834.6 L1325.1,906.0 Z" fill="url(#gCtl)"/>
<line x1="1265.3" y1="853.0" x2="1325.1" y2="853.0" stroke="#5a5a5a" stroke-width="1.2"/>
<line x1="1265.3" y1="854.0" x2="1325.1" y2="854.0" stroke="#b0b0b0" stroke-width="1"/>
<circle cx="1295.6" cy="842.2" r="9.4" fill="url(#gCirc)"/>
<path d="M1290.2,844.6 L1301,844.6 L1295.6,839 Z" fill="#222222"/>
<rect x="1276.8" y="862.5" width="36.2" height="35.9" rx="5" fill="url(#gIco)" stroke="#202020" stroke-width="2.5"/>
<rect x="1287.0" y="872.1" width="16.8" height="16.7" fill="url(#gIcoB)"/>
<rect x="1326.4" y="830.0" width="58.1" height="38.0" fill="url(#gSm)"/>
<circle cx="1355.5" cy="849.5" r="12.3" fill="url(#gSmC)"/>
<rect x="1384.5" y="830.0" width="56.3" height="38.0" fill="url(#gSm)"/>
<line x1="1384.5" y1="830.0" x2="1384.5" y2="868.0" stroke="#5e5e5e" stroke-width="1.2"/>
<circle cx="1412.7" cy="849.5" r="12.3" fill="url(#gSmC)"/>
<rect x="1440.8" y="830.0" width="55.6" height="38.0" fill="url(#gSm)"/>
<line x1="1440.8" y1="830.0" x2="1440.8" y2="868.0" stroke="#5e5e5e" stroke-width="1.2"/>
<circle cx="1468.6" cy="849.5" r="12.3" fill="url(#gSmC)"/>
<rect x="1498.0" y="830.0" width="55.2" height="38.0" fill="url(#gSm)"/>
<circle cx="1525.6" cy="849.5" r="12.3" fill="url(#gSmC)"/>
<rect x="1553.2" y="830.0" width="55.6" height="38.0" fill="url(#gSm)"/>
<line x1="1553.2" y1="830.0" x2="1553.2" y2="868.0" stroke="#5e5e5e" stroke-width="1.2"/>
<circle cx="1581.0" cy="849.5" r="12.3" fill="url(#gSmC)"/>
<rect x="1350.4" y="844.4" width="9.6" height="9.3" fill="#303030"/>
<path d="M1409,843.9 L1419.3,849.9 L1409,855.9 Z" fill="#303030"/>
<text x="1469.0" y="854.2" font-size="15.5" fill="#303030" text-anchor="middle" textLength="15.2" lengthAdjust="spacingAndGlyphs" font-weight="bold" stroke="#303030" stroke-width="0.6">[↔]</text>
<text x="1525.2" y="855.4" font-size="22.0" fill="#303030" text-anchor="middle" textLength="18.2" lengthAdjust="spacingAndGlyphs" stroke="#303030" stroke-width="0.9">∞</text>
<path d="M1575.4,848 A6.2,6.2 0 0 1 1586.2,846 M1587.2,851.2 A6.2,6.2 0 0 1 1576.4,853.2" fill="none" stroke="#303030" stroke-width="2.5"/>
<path d="M1582.6,848.6 L1589.6,848.6 L1589.6,841.6 Z M1580,850.6 L1573,850.6 L1573,857.6 Z" fill="#303030"/>
<rect x="1609.0" y="830.0" width="52.0" height="38.6" fill="url(#gDk)"/>
<circle cx="1638.4" cy="849.5" r="12.3" fill="url(#gDkC)"/>
<rect x="1326.4" y="869.3" width="170.0" height="36.0" fill="url(#gBig)"/>
<rect x="1498.0" y="869.3" width="162.0" height="36.0" fill="url(#gBig)"/>
<line x1="1326.4" y1="869.0" x2="1660.0" y2="869.0" stroke="#585858" stroke-width="1.4"/>
<line x1="1497.2" y1="830.0" x2="1497.2" y2="905.0" stroke="#4a4a4a" stroke-width="1.6"/>
<circle cx="1365.5" cy="887.7" r="12" fill="url(#gSmC)"/>
<circle cx="1631.5" cy="887.7" r="12" fill="url(#gSmC)"/>
<text x="1365.2" y="897.2" font-size="30.0" fill="#303030" text-anchor="middle" textLength="12.8" lengthAdjust="spacingAndGlyphs" stroke="#303030" stroke-width="0.5">«</text>
<text x="1631.8" y="897.2" font-size="30.0" fill="#303030" text-anchor="middle" textLength="12.8" lengthAdjust="spacingAndGlyphs" stroke="#303030" stroke-width="0.5">»</text>
<text x="1398.6" y="897.0" font-size="26.0" fill="#333333" textLength="63.2" lengthAdjust="spacingAndGlyphs" stroke="#333" stroke-width="0.5">Back</text>
<text x="1531.7" y="897.0" font-size="26.0" fill="#333333" textLength="64.5" lengthAdjust="spacingAndGlyphs" stroke="#333" stroke-width="0.5">Next</text>
</svg>
</body></html>
